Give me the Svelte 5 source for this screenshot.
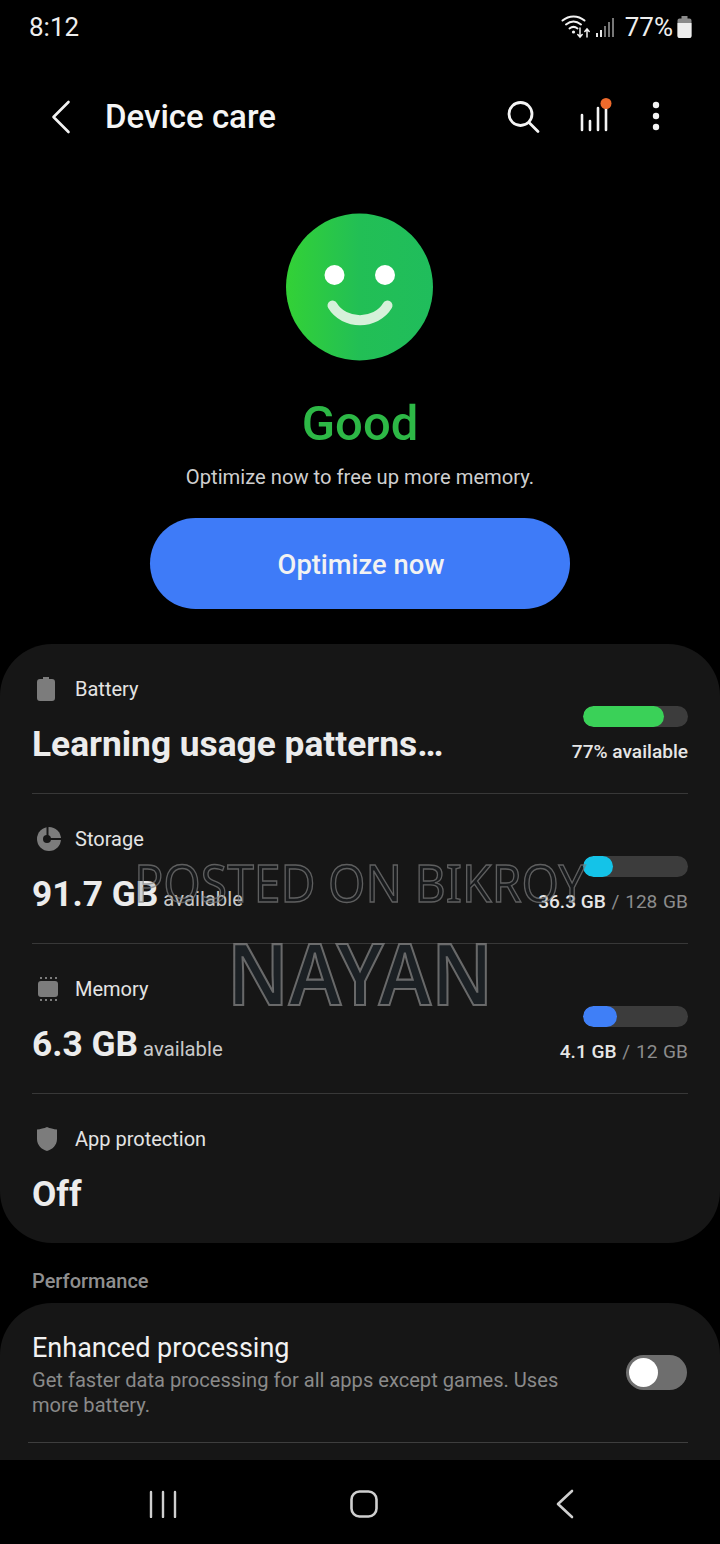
<script>
  const rows = [
    { id: 'battery', label: 'Battery', value: 'Learning usage patterns…', pct: 77, color: '#3ad158', strong: '77% available', rest: '' },
    { id: 'storage', label: 'Storage', value: '91.7 GB', unit: 'available', pct: 28.5, color: '#14c3e8', strong: '36.3 GB', rest: ' / 128 GB' },
    { id: 'memory', label: 'Memory', value: '6.3 GB', unit: 'available', pct: 32.5, color: '#3f7ff7', strong: '4.1 GB', rest: ' / 12 GB' },
    { id: 'shield', label: 'App protection', value: 'Off' }
  ];
</script>

<div class="page">
  <div class="watermark" aria-hidden="true">
    <div class="wm1">POSTED ON BIKROY</div>
    <div class="wm2">NAYAN</div>
  </div>

  <main class="content">
    <header class="status">
      <span class="time">8:12</span>
      <div class="status-right">
        <svg class="wifi" width="30" height="26" viewBox="0 0 30 26" fill="none" stroke="#f2f2f2" stroke-linecap="round">
          <path d="M1.500 6.500C8 1 17 1 23.500 6.500" stroke-width="2" />
          <path d="M5 10.500C10 6.500 15 6.500 20 10.500" stroke-width="2" />
          <path d="M8.500 14.500C11 12.500 14 12.500 16.500 14.500" stroke-width="2" />
          <circle cx="12.500" cy="18" r="1.600" fill="#f2f2f2" stroke="none" />
          <path d="M19 14v9M16.800 20.500l2.200 2.500 2.200-2.500M26 23v-8M23.800 17.500l2.200-2.500 2.200 2.500" stroke-width="1.500" />
        </svg>
        <svg class="signal" width="20" height="22" viewBox="0 0 20 22">
          <rect x="1" y="17" width="2" height="4" fill="#e8e8e8" />
          <rect x="5" y="14" width="2" height="7" fill="#e8e8e8" />
          <rect x="9" y="10" width="2" height="11" fill="#777" />
          <rect x="13" y="6" width="2" height="15" fill="#777" />
          <rect x="17" y="2" width="2" height="19" fill="#777" />
        </svg>
        <span class="pct">77%</span>
        <svg class="batt" width="15" height="22" viewBox="0 0 15 22">
          <path d="M4.500 0h6v2.500h2a2 2 0 0 1 2 2V20a2 2 0 0 1-2 2h-10a2 2 0 0 1-2-2V4.500a2 2 0 0 1 2-2h2z" fill="#8a8a8a" />
          <path d="M0.500 7h14v13a2 2 0 0 1-2 2h-10a2 2 0 0 1-2-2z" fill="#ededed" />
        </svg>
      </div>
    </header>

    <nav class="toolbar">
      <svg class="back" width="20" height="34" viewBox="0 0 20 34" fill="none" stroke="#f2f2f2" stroke-width="2.600" stroke-linecap="round" stroke-linejoin="round">
        <path d="M17.500 2L2.500 17l15 15" />
      </svg>
      <h1>Device care</h1>
      <div class="actions">
        <svg width="34" height="34" viewBox="0 0 34 34" fill="none" stroke="#f5f5f5" stroke-width="2.800" stroke-linecap="round">
          <circle cx="14.500" cy="14" r="11.500" />
          <path d="M23 22.500l9 9" />
        </svg>
        <svg class="bars" width="34" height="38" viewBox="0 0 34 38" fill="none" stroke="#f5f5f5" stroke-width="2.600" stroke-linecap="round">
          <path d="M4 17v15M12 23v9M20 10v22M28 6v26" />
          <circle cx="28" cy="5.500" r="5.500" fill="#ee6a2c" stroke="none" />
        </svg>
        <svg class="more" width="8" height="30" viewBox="0 0 8 30" fill="#f5f5f5">
          <circle cx="4" cy="4" r="3.200" /><circle cx="4" cy="15" r="3.200" /><circle cx="4" cy="26" r="3.200" />
        </svg>
      </div>
    </nav>

    <section class="hero">
      <svg class="face" width="148" height="148" viewBox="0 0 148 148">
        <defs>
          <linearGradient id="fg" x1="0" x2="1" y1="0" y2="0">
            <stop offset="0" stop-color="#33d136" />
            <stop offset="0.5" stop-color="#22bf55" />
            <stop offset="1" stop-color="#20bd5c" />
          </linearGradient>
        </defs>
        <circle cx="73.500" cy="74" r="73.500" fill="url(#fg)" />
        <circle cx="48.500" cy="62" r="10" fill="#fff" />
        <circle cx="99" cy="62" r="10" fill="#fff" />
        <path d="M46.500 92.500C58 112 90 112 101.500 92.500" fill="none" stroke="#d6f1da" stroke-width="10" stroke-linecap="round" />
      </svg>
      <div class="good">Good</div>
      <p class="sub">Optimize now to free up more memory.</p>
      <button class="cta">Optimize now</button>
    </section>

    <section class="card stats">
      {#each rows as r}
        <div class="row">
          <div class="left">
            <div class="label">
              <span class="ico">
                {#if r.id === 'battery'}
                  <svg width="18" height="24" viewBox="0 0 18 24"><path d="M6 0h6v2h3a3 3 0 0 1 3 3v16a3 3 0 0 1-3 3H3a3 3 0 0 1-3-3V5a3 3 0 0 1 3-3h3z" fill="#7c7c7c" /></svg>
                {:else if r.id === 'storage'}
                  <svg width="24" height="24" viewBox="0 0 24 24">
                    <circle cx="12" cy="12" r="12" fill="#7c7c7c" />
                    <path d="M10.500 0v12H24" fill="none" stroke="#161616" stroke-width="2" />
                    <circle cx="10" cy="12" r="4" fill="#161616" />
                  </svg>
                {:else if r.id === 'memory'}
                  <svg width="22" height="24" viewBox="0 0 22 24" fill="#7c7c7c">
                    <rect x="1" y="4" width="20" height="16" rx="3" />
                    <path d="M3 0h2v2H3zM8 0h2v2H8zM13 0h2v2h-2zM18 0h2v2h-2zM3 22h2v2H3zM8 22h2v2H8zM13 22h2v2h-2zM18 22h2v2h-2z" />
                  </svg>
                {:else}
                  <svg width="20" height="24" viewBox="0 0 20 24"><path d="M10 0c3 1.300 6.500 2.200 10 2.500V12c0 6-4.500 10.500-10 12C4.500 22.500 0 18 0 12V2.500C3.500 2.200 7 1.300 10 0z" fill="#7c7c7c" /></svg>
                {/if}
              </span>
              <span>{r.label}</span>
            </div>
            <div class="value">{r.value}{#if r.unit}<span class="unit">{r.unit}</span>{/if}</div>
          </div>
          {#if r.pct}
            <div class="right">
              <div class="track"><div class="fill" style="width:{r.pct}%;background:{r.color}"></div></div>
              <div class="usage"><strong>{r.strong}</strong><span>{r.rest}</span></div>
            </div>
          {/if}
        </div>
      {/each}
    </section>

    <div class="section-title">Performance</div>

    <section class="card perf">
      <div class="perf-row">
        <div class="perf-text">
          <div class="perf-title">Enhanced processing</div>
          <div class="perf-desc">Get faster data processing for all apps except games. Uses more battery.</div>
        </div>
        <div class="toggle"><div class="knob"></div></div>
      </div>
      <div class="perf-div"></div>
    </section>
  </main>

  <footer class="navbar">
    <svg width="28" height="28" viewBox="0 0 28 28" fill="none" stroke="#cfcfcf" stroke-width="2.400" stroke-linecap="round">
      <path d="M2 2v25M14 2v25M26 2v25" />
    </svg>
    <svg width="28" height="28" viewBox="0 0 28 28" fill="none" stroke="#cfcfcf" stroke-width="2.600">
      <rect x="1.500" y="1.500" width="25" height="25" rx="8" />
    </svg>
    <svg width="18" height="30" viewBox="0 0 18 30" fill="none" stroke="#cfcfcf" stroke-width="2.600" stroke-linecap="round" stroke-linejoin="round">
      <path d="M16 2L2 15l14 13" />
    </svg>
  </footer>
</div>

<style>
  :global(body) { margin: 0; background: #000; }
  .page {
    position: relative;
    width: 720px;
    height: 1544px;
    overflow: hidden;
    background: #000;
    color: #f2f2f2;
    font-family: Roboto, "Liberation Sans", sans-serif;
    display: flex;
    flex-direction: column;
  }
  .content { height: 1460px; overflow: hidden; flex: none; }

  .status {
    height: 54px;
    display: flex;
    align-items: center;
    justify-content: space-between;
    padding: 0 28px 0 29px;
    box-sizing: border-box;
  }
  .time { font-size: 26px; color: #eee; }
  .status-right { display: flex; align-items: center; }
  .wifi { margin-right: 4px; }
  .signal { margin-right: 10px; }
  .pct { font-size: 26px; color: #eee; margin-right: 4px; }

  .toolbar {
    height: 124px;
    display: flex;
    align-items: center;
    padding: 0 0 2px 51px;
  }
  h1 { margin: 0 0 0 34px; font-size: 33px; font-weight: 500; color: #f5f5f5; }
  .actions { margin-left: auto; display: flex; align-items: center; padding-right: 60px; }
  .actions .bars { margin-left: 38px; margin-top: 2px; }
  .actions .more { margin-left: 40px; margin-top: -1px; }
  .actions > svg:first-child { margin-top: 2px; }
  .back { margin-top: 2px; }

  .hero { display: flex; flex-direction: column; align-items: center; }
  .face { margin-top: 33px; display: block; }
  .good { margin-top: 33px; height: 60px; line-height: 60px; font-size: 49px; font-weight: 500; color: #2db846; }
  .sub { margin: 8px 0 0; line-height: 30px; font-size: 20.200px; color: #cfcfcf; }
  .cta {
    margin-top: 26px;
    width: 420px;
    height: 91px;
    padding: 2px 0 0 2px;
    border: 0;
    border-radius: 46px;
    background: #3e7bf8;
    color: #f2f2f2;
    font-family: inherit;
    font-size: 27.300px;
    font-weight: 500;
  }

  .card { background: #161616; border-radius: 52px; }
  .stats { margin-top: 35px; padding: 0 32px; height: 599px; overflow: hidden; }
  .row {
    height: 150px;
    box-sizing: border-box;
    border-bottom: 1px solid #383838;
    display: flex;
    justify-content: space-between;
  }
  .row:last-child { border-bottom: 0; }
  .left { padding-top: 30px; }
  .label { display: flex; align-items: center; height: 30px; font-size: 20px; color: #e4e4e4; }
  .ico { width: 43px; display: flex; justify-content: flex-start; padding-left: 5px; box-sizing: border-box; }
  .value { margin-top: 16px; height: 48px; line-height: 48px; font-size: 35.300px; font-weight: 700; color: #ececec; white-space: nowrap; }
  .unit { margin-left: 5px; font-size: 20.300px; font-weight: 400; color: #c9c9c9; }
  .right { padding-top: 62px; display: flex; flex-direction: column; align-items: flex-end; }
  .track { width: 105px; height: 21px; border-radius: 11px; background: #3c3c3c; overflow: hidden; }
  .fill { height: 100%; border-radius: 11px; }
  .usage { margin-top: 10px; line-height: 30px; font-size: 19.100px; color: #8c8c8c; white-space: pre; }
  .usage span { word-spacing: 1px; }
  .usage strong { font-weight: 500; color: #e6e6e6; }

  .section-title { margin: 23px 0 0 32px; line-height: 30px; font-size: 20px; font-weight: 500; color: #8f8f8f; }

  .perf { margin-top: 7px; height: 240px; padding: 0 32px 0 28px; }
  .perf-row { display: flex; align-items: flex-start; height: 139px; padding: 27px 1px 0 4px; box-sizing: border-box; }
  .perf-text { width: 540px; }
  .perf-title { line-height: 36px; font-size: 27px; color: #f2f2f2; }
  .perf-desc { margin-top: 2px; line-height: 24.500px; font-size: 20.100px; color: #8a8a8a; }
  .toggle {
    margin: 25px 0 0 auto;
    width: 61px;
    height: 35px;
    border-radius: 18px;
    background: #6e6e6e;
    display: flex;
    align-items: center;
    padding-left: 3px;
    box-sizing: border-box;
  }
  .knob { width: 29px; height: 29px; border-radius: 50%; background: #fff; }
  .perf-div { height: 1px; background: #3e3e3e; }

  .navbar {
    flex: none;
    height: 84px;
    box-sizing: border-box;
    background: #000;
    display: grid;
    grid-template-columns: 201px 201px 201px;
    align-items: center;
    justify-items: center;
    padding: 4px 0 0 62px;
  }

  .watermark {
    position: absolute;
    left: 0;
    right: 0;
    top: 852px;
    text-align: center;
    font-family: "Noto Sans", "DejaVu Sans", sans-serif;
    pointer-events: none;
    z-index: 2;
  }
  .wm1 {
    font-size: 48px;
    line-height: 62px;
    color: rgba(40, 55, 70, 0.15);
    -webkit-text-stroke: 1.300px rgba(125, 125, 125, 0.7);
    white-space: nowrap;
    transform: scaleY(1.08);
  }
  .wm2 {
    margin-top: 14px;
    font-size: 78px;
    line-height: 90px;
    font-weight: 600;
    color: rgba(40, 55, 70, 0.3);
    -webkit-text-stroke: 2px rgba(125, 125, 125, 0.8);
    transform: scaleY(1.08);
  }
</style>
